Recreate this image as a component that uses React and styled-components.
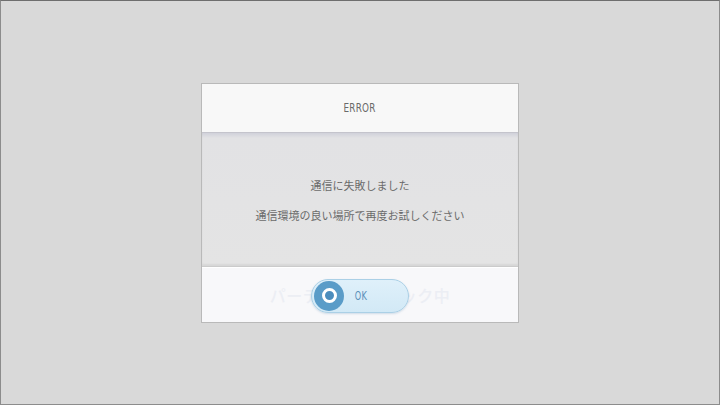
import React from "react";
import styled, { createGlobalStyle } from "styled-components";

const GlobalStyle = createGlobalStyle`
  html, body {
    margin: 0;
    padding: 0;
  }
  body {
    font-family: "Noto Sans CJK JP", "Noto Sans", sans-serif;
  }
`;

const Screen = styled.div`
  width: 720px;
  height: 405px;
  box-sizing: border-box;
  background: #d9d9d9;
  border: 1px solid #8c8c8c;
  border-top-color: #6e6e6e;
  display: flex;
  align-items: center;
  justify-content: center;
`;

const Dialog = styled.div`
  width: 318px;
  height: 240px;
  box-sizing: border-box;
  border: 1px solid #b9b9b9;
  background: #f7f7f7;
  display: flex;
  flex-direction: column;
  box-shadow: inset 0 0 0 1px #ffffff;
`;

const Header = styled.div`
  height: 48px;
  flex-shrink: 0;
  display: flex;
  align-items: center;
  justify-content: center;
  background: #f8f8f8;
  border-bottom: 1px solid #c4c4cc;
`;

/* the game font is a tall condensed face; squeeze a plain sans to get close */
const Narrow = styled.span`
  display: inline-block;
  font-family: "DejaVu Sans", "Liberation Sans", sans-serif;
  font-size: ${(p) => p.$size || 13}px;
  color: ${(p) => p.$color || "#6a6a6a"};
  transform: scaleX(0.68);
  letter-spacing: 0.3px;
`;

const Body = styled.div`
  flex: 1;
  display: flex;
  flex-direction: column;
  align-items: center;
  justify-content: center;
  gap: 17px;
  background: linear-gradient(#d0d1da 0px, #e2e2e4 5px, #e4e4e4 100%);
  border-bottom: 1px solid #cbcbcb;
  box-shadow: inset 0 -2px 2px rgba(0, 0, 0, 0.06);
  padding-top: 3px;
`;

const Message = styled.p`
  margin: 0;
  font-size: 11px;
  line-height: 13px;
  color: #6b6b6b;
`;

const Footer = styled.div`
  height: 54px;
  flex-shrink: 0;
  position: relative;
  display: flex;
  align-items: center;
  justify-content: center;
  background: #f8f8fa;
  border-top: 1px solid #ffffff;
`;

const GhostText = styled.span`
  position: absolute;
  left: 0;
  right: 0;
  top: 50%;
  transform: translateY(-50%);
  text-align: center;
  font-size: 16px;
  font-weight: 500;
  color: #eceef4;
  letter-spacing: 0.5px;
  pointer-events: none;
`;

const OkButton = styled.button`
  position: relative;
  width: 98px;
  height: 34px;
  box-sizing: border-box;
  padding: 0 0 0 2px;
  border-radius: 17px;
  border: 1px solid #abd0e6;
  background: linear-gradient(#dff0fa, #d2e9f6);
  box-shadow: 0 1px 2px rgba(90, 140, 180, 0.25);
  display: flex;
  align-items: center;
  gap: 8px;
  cursor: pointer;
  margin-top: 2px;
`;

const Knob = styled.span`
  width: 30px;
  height: 30px;
  border-radius: 50%;
  background: #5a9cc8;
  display: flex;
  align-items: center;
  justify-content: center;
  flex-shrink: 0;
`;

const KnobRing = styled.span`
  width: 9px;
  height: 9px;
  border-radius: 50%;
  border: 3.5px solid #ffffff;
  background: #4c8dbd;
`;

export default function App() {
  return (
    <>
      <GlobalStyle />
      <Screen>
        <Dialog>
          <Header>
            <Narrow>ERROR</Narrow>
          </Header>
          <Body>
            <Message>通信に失敗しました</Message>
            <Message>通信環境の良い場所で再度お試しください</Message>
          </Body>
          <Footer>
            <GhostText>パーティーをチェック中</GhostText>
            <OkButton>
              <Knob>
                <KnobRing />
              </Knob>
              <Narrow $size={12} $color="#5b8fb8">
                OK
              </Narrow>
            </OkButton>
          </Footer>
        </Dialog>
      </Screen>
    </>
  );
}
